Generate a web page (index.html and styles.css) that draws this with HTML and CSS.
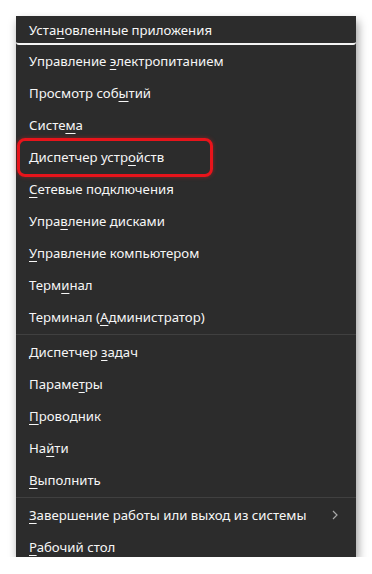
FILE: index.html
```html
<!DOCTYPE html>
<html lang="ru">
<head>
<meta charset="utf-8">
<link rel="stylesheet" href="styles.css">
</head>
<body>
<div class="menu">
  <div class="item focused"><span>Уста<u>н</u>овленные приложения</span></div>
  <div class="item"><span>Управление <u>э</u>лектропитанием</span></div>
  <div class="item"><span>Просмотр соб<u>ы</u>тий</span></div>
  <div class="item"><span>Систе<u>м</u>а</span></div>
  <div class="item marked"><span>Диспетчер устр<u>о</u>йств</span><span class="ring"></span></div>
  <div class="item"><span><u>С</u>етевые подключения</span></div>
  <div class="item"><span>Упра<u>в</u>ление дисками</span></div>
  <div class="item"><span><u>У</u>правление компьютером</span></div>
  <div class="item"><span>Терм<u>и</u>нал</span></div>
  <div class="item"><span>Терминал (<u>А</u>дминистратор)</span></div>
  <div class="sep"></div>
  <div class="item"><span>Диспетчер <u>з</u>адач</span></div>
  <div class="item"><span>Параме<u>т</u>ры</span></div>
  <div class="item"><span><u>П</u>роводник</span></div>
  <div class="item"><span>На<u>й</u>ти</span></div>
  <div class="item"><span><u>В</u>ыполнить</span></div>
  <div class="sep"></div>
  <div class="item sub"><span><u>З</u>авершение работы или выход из системы</span><svg class="chev" width="6" height="10" viewBox="0 0 6 10"><path d="M1 1 L5 5 L1 9" fill="none" stroke="#a8a8a8" stroke-width="1.2"/></svg></div>
  <div class="item last"><span><u>Р</u>абочий стол</span></div>
</div>
</body>
</html>
```
FILE: styles.css
```css
html, body {
  margin: 0;
  padding: 0;
  background: #ffffff;
}
body {
  padding: 16px 0 0 16px;
  font-family: "Noto Sans", "Open Sans", sans-serif;
}
.menu {
  width: 340px;
  background: #2c2c2c;
  box-shadow: 2px 5px 9px rgba(0, 0, 0, 0.4);
  display: flex;
  flex-direction: column;
}
.item {
  position: relative;
  height: 32px;
  display: flex;
  align-items: center;
  padding-left: 13px;
  padding-right: 18px;
  color: #f6f6f6;
  font-size: 13.2px;
  white-space: nowrap;
}
.item.focused {
  height: 27px;
  border-bottom: 2px solid #f4f4f4;
  border-radius: 0 0 3px 3px;
}
.item.last {
  box-sizing: border-box;
  height: 26px;
  padding-top: 6px;
}
.item u {
  text-decoration: underline;
  text-decoration-thickness: 1px;
  text-underline-offset: 3px;
}
.sep {
  height: 1px;
  background: #404040;
  margin: 1px 0;
}
.sub {
  justify-content: space-between;
}
.ring {
  position: absolute;
  left: 1px;
  top: -3px;
  width: 190px;
  height: 33px;
  border: 3px solid #e8141b;
  border-radius: 8px;
  box-shadow: 0 0 4px rgba(255, 30, 30, 0.4);
}
```
